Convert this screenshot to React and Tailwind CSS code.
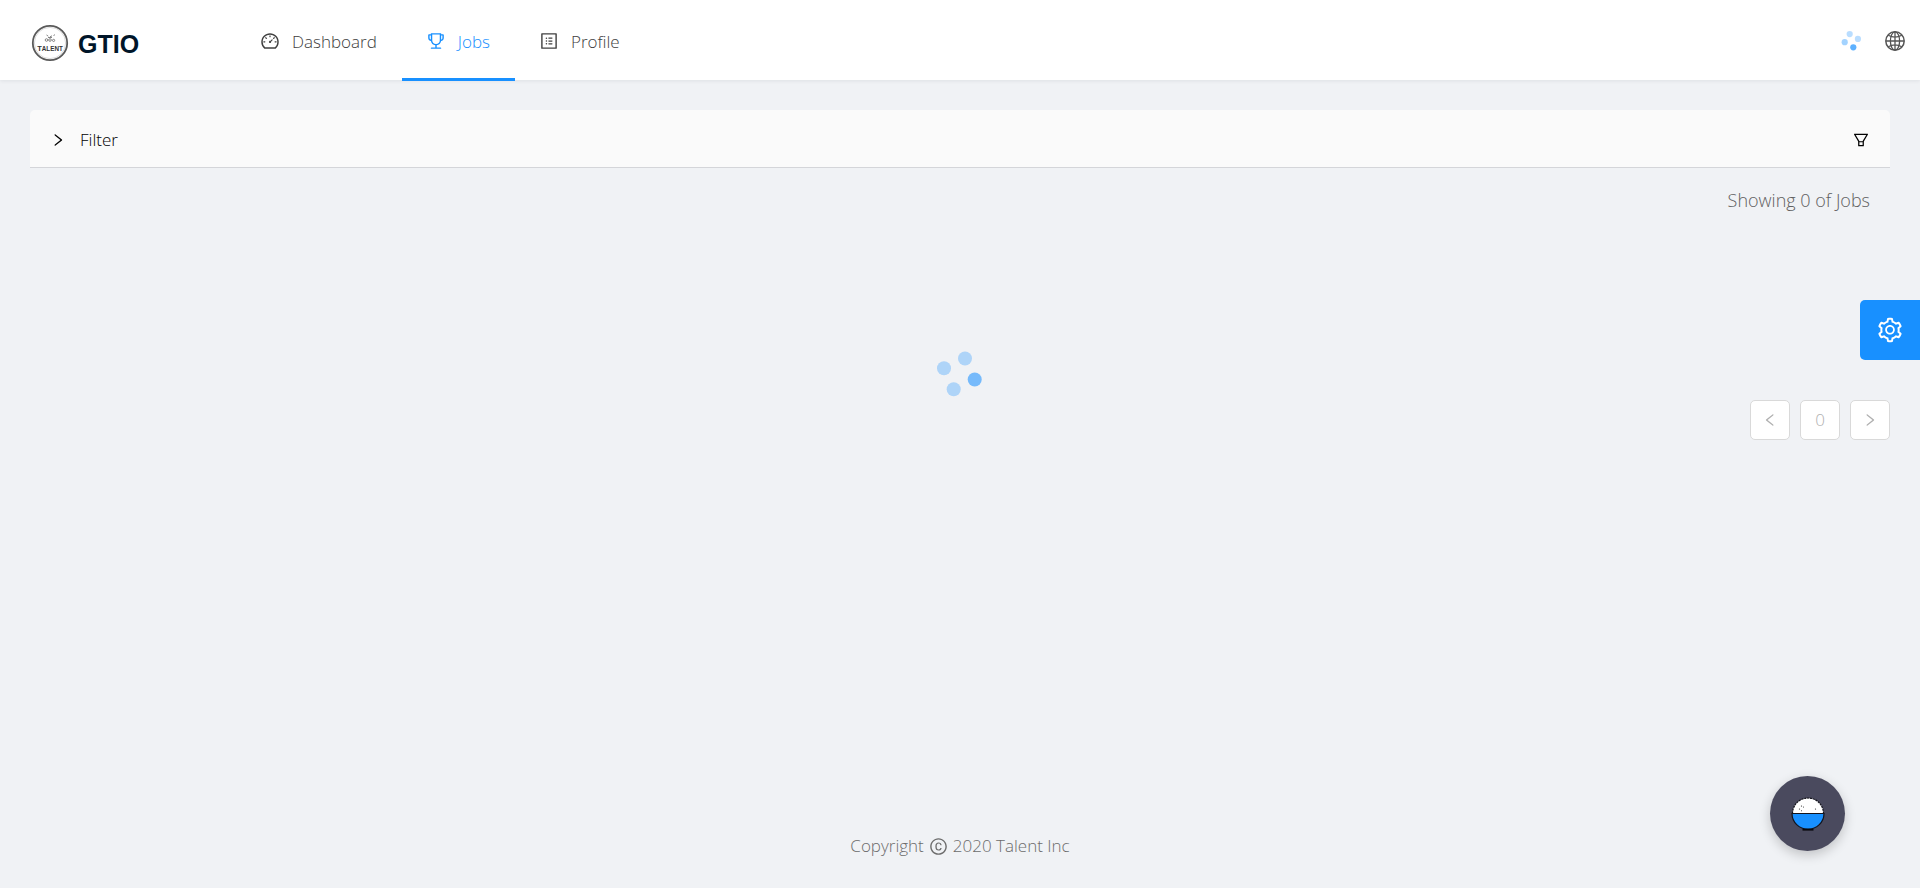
import React from 'react';
import {
  AiOutlineDashboard,
  AiOutlineTrophy,
  AiOutlineProfile,
  AiOutlineSetting,
  AiOutlineFilter,
  AiOutlineRight,
  AiOutlineLeft,
  AiOutlineCopyright,
} from 'react-icons/ai';

function Logo() {
  return (
    <svg viewBox="0 0 38 38" className="size-[38px]" aria-hidden="true">
      <circle cx="19" cy="19" r="17.2" fill="#fff" stroke="#5a5a5a" strokeWidth="1.8" />
      <circle cx="19" cy="19" r="15.6" fill="none" stroke="#bbb" strokeWidth="0.5" />
      <g fill="none" stroke="#777" strokeWidth="0.9">
        <path d="M15.500 11l1.800 1.200M19 12.800l2-1M22.500 11.500l1.500-.8M17 13.500h4" />
        <circle cx="15.500" cy="16" r="1.300" />
        <circle cx="19" cy="16" r="1.300" />
        <circle cx="22.600" cy="16.400" r="1.100" />
      </g>
      <text x="19" y="26.500" textAnchor="middle" fontFamily="Liberation Sans, sans-serif" fontWeight="700" fontSize="6.300" fill="#333">
        <tspan fontSize="7.500">T</tspan>ALENT
      </text>
    </svg>
  );
}

function Globe() {
  return (
    <svg viewBox="0 0 20 20" className="size-5" fill="none" stroke="#555" strokeWidth="1.300" aria-hidden="true">
      <circle cx="10" cy="10" r="9.200" strokeWidth="1.500" />
      <ellipse cx="10" cy="10" rx="4.600" ry="9.200" />
      <path d="M10 1v18M1 10h18M3.200 4.300Q10 8 16.800 4.300M3.200 15.700Q10 12 16.800 15.700" />
    </svg>
  );
}

function BigSpinner() {
  return (
    <svg viewBox="0 0 48 48" className="size-12" fill="#1890ff" role="img" aria-label="Loading">
      <circle cx="8" cy="17.300" r="7" opacity="0.300" />
      <circle cx="29" cy="7.500" r="7" opacity="0.300" />
      <circle cx="38.700" cy="28.500" r="7" opacity="0.570" />
      <circle cx="17.700" cy="38.200" r="7" opacity="0.300" />
    </svg>
  );
}

function SmallSpinner() {
  return (
    <svg viewBox="0 0 20 20" className="size-5" fill="#1890ff" role="img" aria-label="Loading">
      <circle cx="3.700" cy="11.200" r="3.100" opacity="0.400" />
      <circle cx="8.700" cy="3.100" r="3.100" opacity="0.300" />
      <circle cx="16.900" cy="7.900" r="3.100" opacity="0.300" />
      <circle cx="12.300" cy="16.300" r="3.100" opacity="0.700" />
    </svg>
  );
}

function RiceBowl() {
  return (
    <svg viewBox="0 0 34 34" className="size-[34px]" aria-hidden="true">
      <path d="M1.500 16.500A15.500 15.500 0 0 1 32.500 16.500Z" fill="#fff" stroke="#14141c" strokeWidth="1.200" strokeDasharray="2.200 0.700" />
      <path d="M1 16.500H33A16 15.800 0 0 1 1 16.500Z" fill="#1890ff" stroke="#14141c" strokeWidth="1.200" />
      <path d="M11.500 31.600h11v2h-11z" fill="#08080c" />
      <g fill="#222">
        <circle cx="10.500" cy="9" r="0.600" />
        <circle cx="12.500" cy="10" r="0.500" />
        <circle cx="8.500" cy="12" r="0.600" />
        <circle cx="10.500" cy="13.700" r="0.500" />
        <circle cx="24.500" cy="12" r="0.600" />
      </g>
    </svg>
  );
}

const NAV = [
  { label: 'Dashboard', Icon: AiOutlineDashboard },
  { label: 'Jobs', Icon: AiOutlineTrophy, active: true },
  { label: 'Profile', Icon: AiOutlineProfile },
];

function Header() {
  return (
    <header className="z-10 flex h-20 items-stretch bg-white pl-[31px] pr-[15px] shadow-[0_1px_4px_rgba(0,21,41,0.08)]">
      <a href="#home" className="flex w-[205px] items-center gap-[9px] pt-1.5 text-[#001529]">
        <Logo />
        <span className="pt-0.5 font-['Liberation_Sans',sans-serif] text-[25px] leading-8 font-bold">GTIO</span>
      </a>
      <nav className="flex flex-1 items-stretch">
        {NAV.map(({ label, Icon, active }) => (
          <a
            key={label}
            href={'#' + label.toLowerCase()}
            aria-current={active ? 'page' : undefined}
            className={
              active
                ? '-mb-px flex items-center gap-3 border-b-3 border-[#1890ff] pt-1 pr-[25px] pl-6 text-[#1890ff]'
                : '-mb-px flex items-center gap-3 border-b-3 border-transparent pt-1 pr-[25px] pl-6 text-[#404040]'
            }
          >
            <Icon className="size-5" />
            <span className="pt-0.5">{label}</span>
          </a>
        ))}
      </nav>
      <div className="flex items-center gap-6 pt-0.5">
        <SmallSpinner />
        <button type="button" aria-label="Language">
          <Globe />
        </button>
      </div>
    </header>
  );
}

const PAGE_BUTTON =
  'flex size-10 items-center justify-center rounded-[5px] border border-[#d9d9d9] bg-white text-[#b0b0b0]';

export default function App() {
  return (
    <div className="flex min-h-screen flex-col bg-[#f0f2f5] font-['Open_Sans',sans-serif] text-[17px] leading-6 font-light">
      <Header />
      <main className="flex flex-1 flex-col px-[30px] pt-[30px]">
        <section className="flex h-[58px] items-center rounded-t-[5px] border-b border-[#d4d5d9] bg-[#fafafa] px-5 pt-0.5 text-black">
          <button type="button" aria-expanded="false" className="flex flex-1 items-center gap-3.5 text-left">
            <AiOutlineRight className="size-4" />
            <span>Filter</span>
          </button>
          <button type="button" aria-label="Filter options">
            <AiOutlineFilter className="size-[18px]" />
          </button>
        </section>
        <p className="mt-5 pr-5 text-right text-lg leading-6 text-[#606060]">Showing 0 of Jobs</p>
        <div className="mt-[139px] flex justify-center">
          <BigSpinner />
        </div>
        <nav aria-label="Pagination" className="mt-px flex justify-end gap-2.5">
          <button type="button" disabled aria-label="Previous page" className={PAGE_BUTTON}>
            <AiOutlineLeft className="size-4" />
          </button>
          <button type="button" disabled className={PAGE_BUTTON}>
            0
          </button>
          <button type="button" disabled aria-label="Next page" className={PAGE_BUTTON}>
            <AiOutlineRight className="size-4" />
          </button>
        </nav>
      </main>
      <footer className="flex items-center justify-center gap-[5px] pb-[30px] text-[#6c6c6c]">
        <span>Copyright</span>
        <AiOutlineCopyright className="size-[19px]" />
        <span>2020 Talent Inc</span>
      </footer>
      <button
        type="button"
        aria-label="Settings"
        className="fixed top-[300px] right-0 flex size-[60px] items-center justify-center rounded-l-[5px] bg-[#1890ff] text-white"
      >
        <AiOutlineSetting className="size-7" />
      </button>
      <button
        type="button"
        aria-label="Open chat"
        className="fixed right-[75px] bottom-[37px] flex size-[75px] items-center justify-center rounded-full bg-[#4a4a5e] shadow-[0_4px_12px_rgba(0,0,0,0.2)]"
      >
        <RiceBowl />
      </button>
    </div>
  );
}
